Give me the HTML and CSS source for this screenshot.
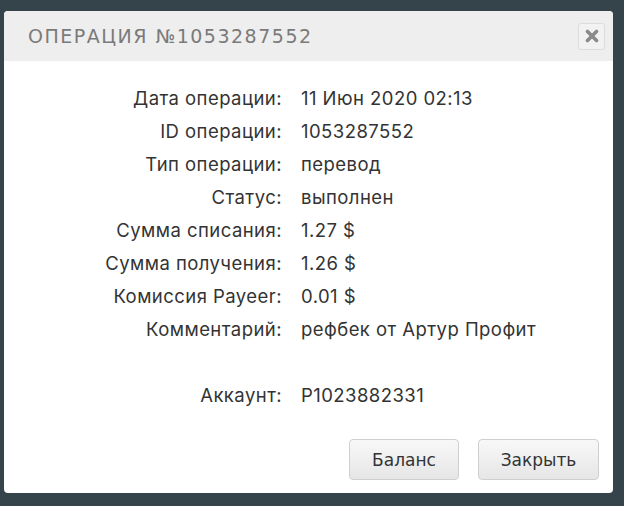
FILE: index.html
```html
<!DOCTYPE html>
<html lang="ru">
<head>
<meta charset="utf-8">
<link rel="stylesheet" href="styles.css">
</head>
<body>
<div class="dialog">
  <div class="header">
    <h1 class="title">ОПЕРАЦИЯ №1053287552</h1>
    <button class="close" aria-label="Закрыть">
      <svg width="14" height="14" viewBox="0 0 14 14"><path d="M2.5 2.5 L11.5 11.5 M11.5 2.5 L2.5 11.5" stroke="#8a8a8a" stroke-width="3.6" stroke-linecap="round"/></svg>
    </button>
  </div>
  <div class="content">
    <dl class="info">
      <dt>Дата операции:</dt><dd>11 Июн 2020 02:13</dd>
      <dt>ID операции:</dt><dd>1053287552</dd>
      <dt>Тип операции:</dt><dd>перевод</dd>
      <dt>Статус:</dt><dd>выполнен</dd>
      <dt>Сумма списания:</dt><dd>1.27 $</dd>
      <dt>Сумма получения:</dt><dd>1.26 $</dd>
      <dt>Комиссия Payeer:</dt><dd>0.01 $</dd>
      <dt>Комментарий:</dt><dd>рефбек от Артур Профит</dd>
      <dt class="spacer"></dt><dd class="spacer"></dd>
      <dt>Аккаунт:</dt><dd>P1023882331</dd>
    </dl>
  </div>
  <div class="footer">
    <button class="btn">Баланс</button>
    <button class="btn">Закрыть</button>
  </div>
</div>
</body>
</html>
```
FILE: styles.css
```css
html, body {
  margin: 0;
  padding: 0;
}
body {
  background: #35434b;
  width: 624px;
  height: 506px;
  overflow: hidden;
  padding-top: 11px;
  padding-left: 4px;
  box-sizing: border-box;
}
.dialog {
  width: 609px;
  height: 482px;
  background: #ffffff;
  border-radius: 4px;
  overflow: hidden;
  display: flex;
  flex-direction: column;
}
.header {
  height: 50px;
  background: #eeeeee;
  display: flex;
  align-items: center;
  justify-content: space-between;
  padding: 0 8px 0 24px;
}
.title {
  margin: 0;
  font-family: "DejaVu Sans", sans-serif;
  font-weight: normal;
  font-size: 19px;
  letter-spacing: 1.5px;
  color: #7a7a7a;
}
.close {
  width: 27px;
  height: 27px;
  padding: 0;
  border: 1px solid #dcdcdc;
  border-radius: 3px;
  background: #f2f2f2;
  display: flex;
  align-items: center;
  justify-content: center;
}
.content {
  padding-top: 21px;
  flex: 1;
}
.info {
  margin: 0;
  display: grid;
  grid-template-columns: 278px auto;
  column-gap: 19px;
  font-family: Inter, sans-serif;
  font-size: 18.5px;
  letter-spacing: 0.45px;
  color: #333333;
}
.info dt, .info dd {
  margin: 0;
  height: 33px;
  line-height: 33px;
  white-space: nowrap;
}
.info dt {
  text-align: right;
}
.footer {
  display: flex;
  justify-content: flex-end;
  gap: 19px;
  padding: 0 14px 13px 0;
}
.btn {
  height: 41px;
  border: 1px solid #cfcfcf;
  border-radius: 4px;
  background: linear-gradient(#f8f8f8, #e6e6e6);
  font-family: "DejaVu Sans", sans-serif;
  font-size: 17px;
  color: #333333;
  padding: 0 20px;
}
.btn:first-child {
  width: 110px;
}
.btn:last-child {
  width: 121px;
}
```
